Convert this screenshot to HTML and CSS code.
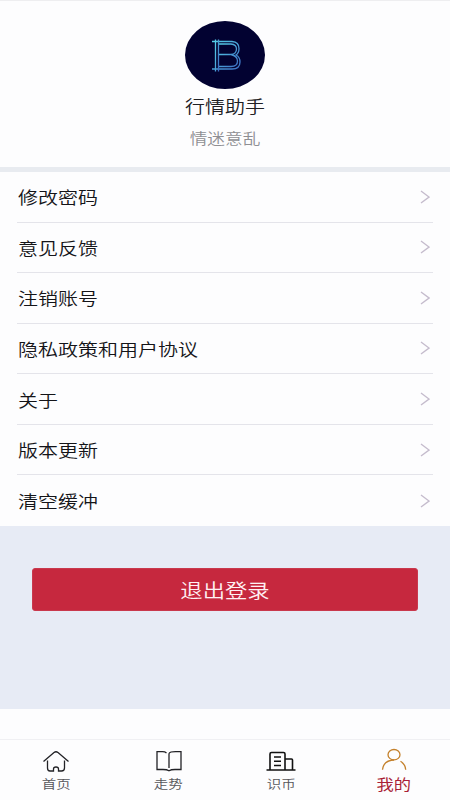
FILE: index.html
```html
<!DOCTYPE html>
<html lang="zh-CN">
<head>
<meta charset="utf-8">
<title>我的</title>
<link rel="stylesheet" href="styles.css">
</head>
<body>
<div class="app">
  <header class="profile">
    <svg class="avatar" viewBox="0 0 80 68">
      <defs><linearGradient id="g" x1="0" y1="0" x2="1" y2="1"><stop offset="0" stop-color="#55d0e8"/><stop offset="1" stop-color="#3d6fc4"/></linearGradient></defs>
      <ellipse cx="40" cy="34" rx="40" ry="34" fill="#020231"/>
      <g fill="none" stroke="url(#g)" stroke-width="1.3">
        <path d="M27 20.500H47Q54 21 54 27.500Q54 32 51 34Q55 36 55 41Q55 48 47 48H27"/>
        <path d="M33.500 23H46Q51.500 23.500 51.500 28Q51.500 33 46 33.500H33.500M46 33.500Q52.500 35 52.500 40Q52.500 45.500 46 45.500H33.500"/>
        <path d="M30.500 18.500V50.500M33.500 18.500V50.500"/>
      </g>
    </svg>
    <h1 class="name"><span class="wide">行情助手</span></h1>
    <p class="bio"><span class="wide">情迷意乱</span></p>
  </header>
  <ul class="menu">
    <li><span class="wide">修改密码</span><svg class="chevron" viewBox="0 0 10 14"><path d="M1 1L9 7L1 13"/></svg></li>
    <li><span class="wide">意见反馈</span><svg class="chevron" viewBox="0 0 10 14"><path d="M1 1L9 7L1 13"/></svg></li>
    <li><span class="wide">注销账号</span><svg class="chevron" viewBox="0 0 10 14"><path d="M1 1L9 7L1 13"/></svg></li>
    <li><span class="wide">隐私政策和用户协议</span><svg class="chevron" viewBox="0 0 10 14"><path d="M1 1L9 7L1 13"/></svg></li>
    <li><span class="wide">关于</span><svg class="chevron" viewBox="0 0 10 14"><path d="M1 1L9 7L1 13"/></svg></li>
    <li><span class="wide">版本更新</span><svg class="chevron" viewBox="0 0 10 14"><path d="M1 1L9 7L1 13"/></svg></li>
    <li><span class="wide">清空缓冲</span><svg class="chevron" viewBox="0 0 10 14"><path d="M1 1L9 7L1 13"/></svg></li>
  </ul>
  <section class="actions">
    <button class="logout"><span class="wide">退出登录</span></button>
  </section>
  <nav class="tabs">
    <a class="tab">
      <svg viewBox="0 0 30 26"><path d="M2.500 13.500L13 4.500Q15 3 17 4.500L27.500 13.500M6.500 12.500V20Q6.500 23 9 23H12.500V21Q12.500 19 15 19Q17.500 19 17.500 21V23H20.500Q23.500 23 23.500 20V12.500"/></svg>
      <span class="wide">首页</span>
    </a>
    <a class="tab">
      <svg viewBox="0 0 30 26"><path d="M15 5.500V20M12.500 5Q11 3.700 8.500 3.700H3V21.500H9Q13 21.500 15 22.700Q17 21.500 21 21.500H27V3.700H21.500Q16 3.700 15 5.500"/></svg>
      <span class="wide">走势</span>
    </a>
    <a class="tab">
      <svg viewBox="0 0 30 26" class="bold"><path d="M.5 22H29.500M4 22V6Q4 4.500 5.500 4.500H17.500Q19 4.500 19 6V22M19 11H25.500Q26.500 11 26.500 12V22M8 9H15M8 13.300H15M8 17.500H15"/></svg>
      <span class="wide">识币</span>
    </a>
    <a class="tab active">
      <svg viewBox="0 0 30 26"><ellipse cx="15" cy="6.700" rx="6" ry="5.200"/><path d="M3.500 21.700Q4.500 12.500 15 12M21.500 13.200Q26.500 16.500 26.700 21.700"/></svg>
      <span class="wide">我的</span>
    </a>
  </nav>
</div>
</body>
</html>
```
FILE: styles.css
```css
* { box-sizing: border-box; margin: 0; padding: 0; }
body { font-family: "Noto Sans CJK SC", sans-serif; background: #fdfdfe; color: #202024; }
.app { width: 450px; height: 800px; display: flex; flex-direction: column; border-top: 1px solid #eeeef0; overflow: hidden; }
.wide { display: inline-block; transform: scaleX(1.176); white-space: nowrap; }
.profile { height: 171px; border-bottom: 5px solid #e8ebf0; padding-top: 20px; display: flex; flex-direction: column; align-items: center; flex: none; }
.avatar { width: 80px; height: 68px; flex: none; }
.name { font-size: 17px; font-weight: 350; line-height: 24px; margin-top: 5px; }
.bio { font-size: 15px; font-weight: 350; line-height: 22px; margin-top: 9px; color: #8f8f93; }
.menu { list-style: none; height: 354px; padding: 0 17px; display: grid; grid-template-rows: repeat(7, 1fr); flex: none; font-size: 17px; font-weight: 350; color: #141418; }
.menu li { display: flex; align-items: center; justify-content: space-between; border-bottom: 1px solid #e4e4ea; padding: 0 3px 0 .6px; }
.menu li:last-child { border-bottom: 0; }
.menu .wide { transform-origin: left center; }
.chevron { width: 10px; height: 14px; fill: none; stroke: #c5bccd; stroke-width: 1.4; }
.actions { height: 183px; background: #e7ebf5; padding: 42px 32px 0; flex: none; }
.logout { display: block; width: 386px; height: 43px; border: 1px solid #c9384d; border-radius: 3px; background: #c6283e; color: #fff0f3; font: 350 19px "Noto Sans CJK SC", sans-serif; }
.tabs { margin-top: 30px; flex: 1; border-top: 1px solid #f0f0f3; display: grid; grid-template-columns: repeat(4, 1fr); }
.tab { display: flex; flex-direction: column; align-items: center; padding-top: 8px; font-size: 12.3px; font-weight: 350; line-height: 20px; color: #56565a; }
.tab svg { width: 30px; height: 26px; fill: none; stroke: #222226; stroke-width: 1.3; flex: none; }
.tab svg.bold { stroke: #111; stroke-width: 1.6; }
.tab.active { color: #a91f37; font-size: 14.700px; font-weight: 400; }
.tab.active svg { stroke: #c4812c; }
```
